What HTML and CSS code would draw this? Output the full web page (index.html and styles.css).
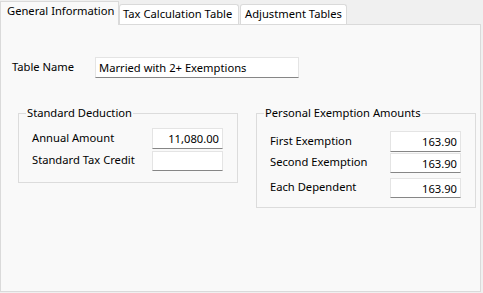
FILE: index.html
```html
<!DOCTYPE html>
<html>
<head>
<meta charset="utf-8">
<link rel="stylesheet" href="styles.css">
</head>
<body>
<div class="window">
  <div class="tabs">
    <div class="tab active">General Information</div>
    <div class="tab t2">Tax Calculation Table</div>
    <div class="tab t3">Adjustment Tables</div>
  </div>
  <div class="panel">
    <div class="name-row">
      <span class="lbl name-lbl">Table Name</span>
      <div class="field name-field">Married with 2+ Exemptions</div>
    </div>
    <div class="groups">
      <div class="group g1">
        <div class="group-title">Standard Deduction</div>
        <div class="row r-a"><span class="lbl">Annual Amount</span><div class="field num">11,080.00</div></div>
        <div class="row r-b"><span class="lbl">Standard Tax Credit</span><div class="field num"></div></div>
      </div>
      <div class="group g2">
        <div class="group-title">Personal Exemption Amounts</div>
        <div class="row r-c"><span class="lbl">First Exemption</span><div class="field num">163.90</div></div>
        <div class="row r-d"><span class="lbl">Second Exemption</span><div class="field num">163.90</div></div>
        <div class="row r-e"><span class="lbl">Each Dependent</span><div class="field num">163.90</div></div>
      </div>
    </div>
  </div>
</div>
</body>
</html>
```
FILE: styles.css
```css
body {
  margin: 0;
  background: #f0f0f0;
  font-family: "Noto Sans", "Open Sans", sans-serif;
  font-size: 11.2px;
  color: #000;
  width: 483px;
  height: 293px;
  overflow: hidden;
}
.tabs {
  display: flex;
  align-items: flex-end;
  height: 24px;
}
.tab {
  box-sizing: border-box;
  height: 20px;
  border: 1px solid #dadada;
  border-bottom: none;
  background: #fff;
  border-radius: 3px 3px 0 0;
  line-height: 18px;
  white-space: nowrap;
  overflow: hidden;
}
.tab.active {
  position: relative;
  z-index: 1;
  height: 24px;
  margin-bottom: -1px;
  width: 119px;
  padding-left: 6px;
  background: #f9f9f9;
  line-height: 18px;
  border-radius: 0;
}
.tab.t2 {
  width: 120px;
  padding-left: 3px;
}
.tab.t3 {
  width: 107px;
  margin-left: 1px;
  padding-left: 4px;
}
.panel {
  box-sizing: border-box;
  width: 481px;
  height: 268px;
  border: 1px solid #dadada;
  background: #f9f9f9;
  padding: 32px 0 0 11px;
}
.name-row {
  display: flex;
  align-items: center;
}
.name-lbl {
  width: 83px;
  margin-top: -3px;
}
.field {
  box-sizing: border-box;
  height: 21px;
  background: #fff;
  border: 1px solid #e4e4e4;
  border-bottom-color: #868686;
  line-height: 19px;
  padding: 0 3px;
  white-space: nowrap;
}
.name-field {
  width: 204px;
}
.groups {
  display: flex;
  align-items: flex-start;
  gap: 18px;
  margin: 35px 0 0 6px;
}
.group {
  box-sizing: border-box;
  width: 220px;
  border: 1px solid #dcdcdc;
}
.g1 { height: 70px; }
.g2 { height: 95px; }
.group-title {
  width: max-content;
  margin: -9px 0 0 7px;
  padding: 0 1px;
  line-height: 16px;
  background: #f9f9f9;
}
.row {
  display: flex;
  align-items: center;
  justify-content: space-between;
  padding: 0 14px 0 13px;
}
.row .lbl { margin-top: -3px; }
.num {
  width: 71px;
  text-align: right;
}
.r-a { margin-top: 7px; }
.r-b { margin-top: 2px; }
.r-b .num { height: 20px; }
.r-c { margin-top: 10px; }
.r-d { margin-top: 1px; }
.r-d .num { height: 20px; }
.r-e { margin-top: 5px; }
.r-e .num { height: 20px; }
```
